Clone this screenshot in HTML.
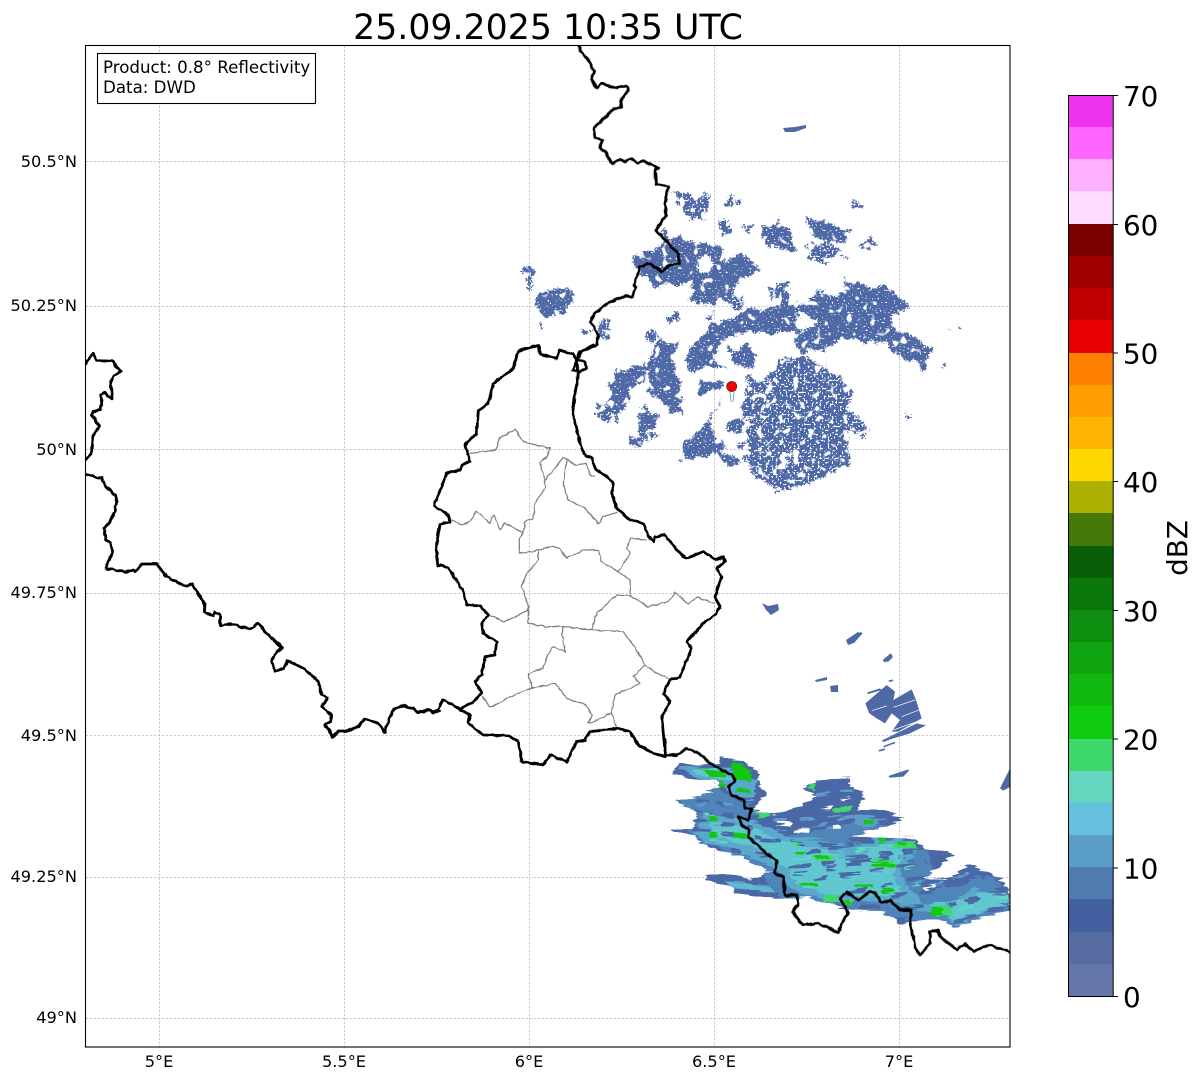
<!DOCTYPE html>
<html><head><meta charset="utf-8"><title>Radar</title>
<style>html,body{margin:0;padding:0;background:#fff}svg{display:block}text{font-family:"DejaVu Sans","Liberation Sans",sans-serif;fill:#000}</style>
</head><body>
<svg width="1202" height="1081" viewBox="0 0 1202 1081" xmlns="http://www.w3.org/2000/svg">
<defs>
<clipPath id="ax"><rect x="85.5" y="45.5" width="924.5" height="1001"/></clipPath>
<filter id="speck" x="0" y="0" width="1202" height="1081" filterUnits="userSpaceOnUse" color-interpolation-filters="sRGB">
<feTurbulence type="fractalNoise" baseFrequency="0.09" numOctaves="2" seed="4" result="n1"/>
<feDisplacementMap in="SourceGraphic" in2="n1" scale="14" xChannelSelector="R" yChannelSelector="G" result="d1"/>
<feTurbulence type="fractalNoise" baseFrequency="0.55" numOctaves="1" seed="11" result="n3"/>
<feDisplacementMap in="d1" in2="n3" scale="7" xChannelSelector="G" yChannelSelector="R" result="d"/>
<feTurbulence type="fractalNoise" baseFrequency="0.5" numOctaves="1" seed="7" result="n2"/>
<feColorMatrix in="n2" type="matrix" values="0 0 0 0 0 0 0 0 0 0 0 0 0 0 0 14 0 0 0 -4" result="m"/>
<feComposite in="d" in2="m" operator="in" result="r1"/>
<feTurbulence type="fractalNoise" baseFrequency="0.13" numOctaves="1" seed="9" result="n4"/>
<feColorMatrix in="n4" type="matrix" values="0 0 0 0 0 0 0 0 0 0 0 0 0 0 0 14 0 0 0 -4.2" result="m2"/>
<feComposite in="r1" in2="m2" operator="in"/>
</filter>
<filter id="speck2" x="0" y="0" width="1202" height="1081" filterUnits="userSpaceOnUse" color-interpolation-filters="sRGB">
<feTurbulence type="fractalNoise" baseFrequency="0.09" numOctaves="2" seed="5" result="n1"/>
<feDisplacementMap in="SourceGraphic" in2="n1" scale="14" xChannelSelector="R" yChannelSelector="G" result="d1"/>
<feTurbulence type="fractalNoise" baseFrequency="0.55" numOctaves="1" seed="12" result="n3"/>
<feDisplacementMap in="d1" in2="n3" scale="7" xChannelSelector="G" yChannelSelector="R" result="d"/>
<feTurbulence type="fractalNoise" baseFrequency="0.5" numOctaves="1" seed="17" result="n2"/>
<feColorMatrix in="n2" type="matrix" values="0 0 0 0 0 0 0 0 0 0 0 0 0 0 0 14 0 0 0 -5" result="m"/>
<feComposite in="d" in2="m" operator="in" result="r1"/>
<feTurbulence type="fractalNoise" baseFrequency="0.14" numOctaves="1" seed="19" result="n4"/>
<feColorMatrix in="n4" type="matrix" values="0 0 0 0 0 0 0 0 0 0 0 0 0 0 0 14 0 0 0 -4.6" result="m2"/>
<feComposite in="r1" in2="m2" operator="in"/>
</filter>
<filter id="jag" x="0" y="0" width="1202" height="1081" filterUnits="userSpaceOnUse" color-interpolation-filters="sRGB">
<feTurbulence type="fractalNoise" baseFrequency="0.04 0.4" numOctaves="1" seed="3" result="n"/>
<feDisplacementMap in="SourceGraphic" in2="n" scale="9" xChannelSelector="R" yChannelSelector="G"/>
</filter>
<filter id="wob" x="0" y="0" width="1202" height="1081" filterUnits="userSpaceOnUse" color-interpolation-filters="sRGB">
<feTurbulence type="fractalNoise" baseFrequency="0.2" numOctaves="1" seed="6" result="n"/>
<feDisplacementMap in="SourceGraphic" in2="n" scale="3" xChannelSelector="R" yChannelSelector="G"/>
</filter>
<clipPath id="stormclip"><path d="M180,50L250,65L295,95L295,130L320,160L300,185L275,210L340,225L430,195L470,165L430,145L470,125L570,110L570,140L610,155L610,180L590,210L670,210L730,235L680,260L575,290L640,295L760,295L800,330L860,335L880,340L830,385L790,415L860,420L930,375L985,395L1030,425L1050,460L1050,510L960,535L880,565L860,545L800,540L720,555L700,530L660,515L570,510L490,490L440,470L350,475L220,460L215,440L140,425L140,405L190,400L270,420L320,400L340,395L310,385L265,365L240,345L150,325L100,290L30,270L100,265L110,215L45,180L110,170L180,145L170,120L100,120L35,100L60,70L120,75L180,70Z"/></clipPath>
</defs>
<rect width="1202" height="1081" fill="#fff"/>

<!-- gridlines -->
<g stroke="#c0c0c0" stroke-width="0.8" stroke-dasharray="2.5 1.5" fill="none">
<path d="M159.5 45.5V1047M344.5 45.5V1047M529.5 45.5V1047M714.5 45.5V1047M899.5 45.5V1047"/>
<path d="M85.5 161.5H1010M85.5 306.5H1010M85.5 449.5H1010M85.5 593.5H1010M85.5 735.5H1010M85.5 877.5H1010M85.5 1018.5H1010"/>
</g>

<g clip-path="url(#ax)">
<!-- radar north, dense -->
<g filter="url(#speck)" fill="#4e69a6">
<g transform="translate(580 180) scale(.33333)">
<path fill-rule="evenodd" d="M240,150L300,170L360,190L430,210L420,240L500,225L530,260L490,300L440,350L380,370L330,360L335,300L300,310L225,325L190,280L160,260L160,225L220,215L260,180ZM375,230A25,25 0 1 0 375,280A25,25 0 1 0 375,230Z"/>
<path d="M545,140L590,125L640,140L640,210L600,215L550,185Z"/>
<path d="M680,115L740,120L810,150L790,190L700,170Z"/>
<path fill-rule="evenodd" d="M500,390L600,380L590,330L620,320L630,380L720,340L800,340L790,290L850,310L940,330L990,380L945,410L940,450L1020,480L1060,500L1040,570L960,530L920,490L850,490L790,480L730,510L650,520L640,450L570,460L490,460L440,470L400,530L440,570L400,560L340,580L310,540L340,490L390,430L440,420ZM650,390L705,420L695,445L650,445Z"/>
<path d="M110,580L200,540L240,470L300,490L280,540L300,620L300,680L310,710L250,670L200,630L210,580L160,620L130,680L110,730L80,670L90,620Z"/>
<path d="M190,680L240,720L200,760L240,765L210,790L170,760Z"/>
<path d="M430,640L400,700L390,750L440,790L410,820L470,830L470,860L440,850L400,820L310,840L300,800L320,780L360,750L390,710Z"/>
<path d="M340,600L420,600L420,630L370,640Z"/>
<path d="M450,510L500,490L530,520L520,560L470,560Z"/>
</g>
<path d="M537,298L560,286L576,292L566,312L545,318L536,308Z"/>
</g>
<!-- radar north, sparse -->
<g filter="url(#speck2)" fill="#4e69a6">
<g transform="translate(580 180) scale(.33333)">
<path d="M280,40L390,50L370,110L340,125L300,70Z"/>
<path d="M415,125L450,120L450,160L420,160ZM475,135L515,140L510,155L480,150ZM465,55L485,60L480,72L465,70ZM440,45L460,45L455,90L440,85Z"/>
<path d="M690,180L770,200L780,220L740,255L685,240Z"/>
<path d="M830,195L870,175L895,195L860,215ZM815,55L850,75L835,90ZM785,225L815,235L790,240Z"/>
<path d="M600,540L680,530L780,590L810,620L800,680L870,760L800,760L800,850L720,900L600,935L530,900L495,840L500,730L550,690L570,640L570,590Z"/>
<path fill="#fff" d="M600,880L640,815L615,815L595,850Z"/>
<path d="M510,620L550,630L530,670L510,650ZM485,600L510,590L510,605ZM480,680L510,690L490,710ZM440,720L490,720L480,760L450,750ZM470,780L500,780L495,800L475,800Z"/>
<path d="M500,600L565,590L545,700L490,720Z"/>
<path d="M1110,440L1130,450L1115,458ZM1140,430L1158,445L1145,450ZM980,705L995,708L990,718ZM1080,555L1100,548L1095,570Z"/>
<path d="M5,450L30,445L28,470L5,465ZM50,430L88,420L85,470L60,470ZM260,400L295,395L295,425L265,420Z"/>
<path d="M430,340L490,350L480,385L440,380ZM560,320L620,300L610,350L570,360ZM700,335L730,330L720,350Z"/>
<path d="M380,400L410,400L395,425Z"/>
<path d="M200,450L250,460L230,490L195,480ZM50,670L100,690L90,730L45,705ZM140,760L175,770L195,810L150,790Z"/>
</g>
<path d="M524,268L532,268L532,290L526,290Z"/>
<path d="M537,325L542,325L541,335L537,335Z"/>
</g>

<!-- small echoes -->
<g fill="#4e69a6">
<path d="M783,128L795,127L806,125L806,128L795,132L785,132Z"/>
<path d="M762,603L768,606L778,604L779,610L771,615L766,610Z"/>
<path d="M846,640L858,632L862,634L854,643L848,645Z"/>
<path d="M885,661L890,655L893,657L888,662Z"/>
<path d="M815,680L827,677L827,680L816,682Z"/>
<path d="M830,686L838,685L838,692L831,692Z"/>
<g transform="translate(860 620) scale(.33333)">
<path d="M0,35L8,40L0,48Z"/>
<path d="M68,120L92,100L98,108L74,128Z"/>
<path d="M85,182L98,178L100,183L88,186Z"/>
<path d="M20,218L60,205L65,210L25,222Z"/>
<path d="M16,250L80,195L105,215L100,240L155,208L168,240L185,295L115,335L95,335L120,300L95,280L75,310L50,295L28,280Z"/>
<path d="M65,362L170,310L198,316L150,340L100,355L70,366Z"/>
<path d="M70,378L105,365L105,370L72,382Z"/>
<path d="M55,390L75,385L75,390L58,395Z"/>
<path d="M85,468L145,448L147,452L130,470L90,473Z"/>
<path d="M420,505L450,445L452,500L430,512Z"/>
<g stroke="#fff" stroke-width="2" fill="none">
<path d="M35,272L80,258M100,262L165,240M125,290L182,268M100,330L170,305"/>
</g>
</g>
</g>

<!-- storm south -->
<g filter="url(#jag)">
<g transform="translate(660 740) scale(.33333)">
<g clip-path="url(#stormclip)">
<rect x="0" y="0" width="1100" height="620" fill="#4a67a6"/>
<path fill="#4f85b8" d="M60,175L180,150L280,200L300,250L380,290L480,270L600,240L700,260L560,300L800,330L820,390L780,440L880,430L980,400L1045,450L1045,510L880,560L700,530L500,490L360,470L300,400L150,320L90,280Z"/>
<path fill="#5aa8cc" d="M130,225L270,240L300,250L380,290L480,300L600,320L650,290L750,300L770,340L720,390L730,420L790,490L860,510L900,470L940,440L1000,470L1045,470L1045,490L960,520L890,560L850,520L780,510L700,490L600,480L500,480L420,460L380,430L350,390L270,350L200,320L140,310L100,280Z"/>
<path fill="#5aa8cc" d="M60,80L210,85L290,120L280,180L220,170L190,140L100,110Z"/>
<path fill="#5f9cc8" d="M580,225L680,235L620,265L590,260Z"/>
<path fill="#5fb8d4" d="M190,420L260,430L330,440L350,460L220,445Z"/>
<path fill="#60c6cf" d="M150,250L270,260L380,310L470,320L540,350L600,350L660,310L740,310L720,370L700,400L720,470L640,470L500,460L420,440L370,380L280,320L160,290Z"/>
<path fill="#60c6cf" d="M800,490L900,480L960,460L1040,470L1040,490L950,520L890,555L870,530Z"/>
<path fill="#60c6cf" d="M95,90L170,80L220,120L180,120L110,105Z"/>
<g fill="none" stroke="#4a67a6" stroke-width="11">
<path stroke-dasharray="60 25 35 40" d="M100,215L300,235"/>
<path stroke-dasharray="50 35 70 30" d="M100,265L300,295"/>
<path stroke-dasharray="45 30 30 45" d="M140,320L340,345"/>
<path stroke-dasharray="60 30 40 50" d="M300,300L560,320"/>
<path stroke-dasharray="40 30 70 25" d="M440,340L720,290"/>
<path stroke-dasharray="70 35 40 30" d="M380,385L780,325"/>
<path stroke-dasharray="40 40 60 30" d="M460,420L800,365"/>
<path stroke-dasharray="60 50 30 40" d="M560,460L850,400"/>
<path stroke-dasharray="50 30 70 40" d="M780,460L1000,400"/>
<path stroke-dasharray="60 30 40 40" d="M830,510L1050,440"/>
<path stroke-dasharray="70 40 50 30" d="M880,545L1050,495"/>
<path stroke-dasharray="60 70" d="M600,500L800,500"/>
<path stroke-dasharray="35 20 50 40" d="M110,180L260,205"/>
<path stroke-dasharray="45 55 25 35" d="M400,400L720,350"/>
<path stroke-dasharray="30 45 60 25" d="M500,380L760,340"/>
<path stroke-dasharray="55 45" d="M690,470L860,440"/>
<path stroke-dasharray="35 40" d="M110,240L280,265"/>
<path stroke-dasharray="40 60" d="M920,490L1040,450"/>
</g>
<g fill="none" stroke="#5f9cc8" stroke-width="7">
<path stroke-dasharray="45 35" d="M460,260L620,220"/>
<path stroke-dasharray="30 50" d="M110,195L260,190"/>
<path stroke-dasharray="40 40" d="M340,240L580,230"/>
<path stroke-dasharray="50 30" d="M800,440L940,395"/>
<path stroke-dasharray="35 40" d="M330,440L200,420"/>
<path stroke-dasharray="40 30" d="M400,170L590,150"/>
<path stroke-dasharray="30 45" d="M350,270L570,260"/>
<path stroke-dasharray="35 35" d="M60,85L160,100"/>
</g>
<g fill="none" stroke="#62d6c0" stroke-width="6">
<path stroke-dasharray="50 40 30 60" d="M150,300L420,330"/>
<path stroke-dasharray="60 35" d="M400,360L740,310"/>
<path stroke-dasharray="50 50" d="M440,440L760,380"/>
<path stroke-dasharray="60 40" d="M900,510L1040,465"/>
<path stroke-dasharray="40 60" d="M120,95L220,120"/>
<path stroke-dasharray="40 50" d="M130,220L260,240"/>
<path stroke-dasharray="45 35" d="M600,470L780,430"/>
</g>
<g fill="#3fd86c">
<path d="M700,310L760,300L770,320L700,325Z"/>
<path d="M640,355L700,365L705,385L650,380Z"/>
<path d="M815,500L870,495L880,530L830,530Z"/>
<path d="M520,210L580,195L570,212L530,220Z"/>
<path d="M745,262L790,245L785,255L750,270Z"/>
<path d="M460,350L520,345L510,360L470,362Z"/>
<path d="M110,80L150,85L135,95Z"/>
<path d="M440,135L470,130L460,150Z"/>
<path d="M490,470L540,460L530,480L495,485Z"/>
<path d="M540,480L590,478L570,495L550,497Z"/>
<path d="M280,215L330,225L300,235Z"/>
<path d="M380,310L410,305L415,320Z"/>
</g>
<g fill="#10c810">
<path d="M215,70L250,75L275,100L270,125L225,120Z"/>
<path d="M135,95L195,95L200,115L140,110Z"/>
<path d="M175,125L200,128L195,140L178,140Z"/>
<path d="M225,145L275,150L270,160L230,158Z"/>
<rect x="148" y="232" width="25" height="15"/>
<rect x="148" y="277" width="22" height="17"/>
<rect x="218" y="278" width="42" height="14"/>
<rect x="612" y="240" width="28" height="14"/>
<rect x="585" y="430" width="55" height="13"/>
<rect x="665" y="445" width="35" height="12"/>
<rect x="635" y="365" width="50" height="10"/>
<rect x="685" y="370" width="20" height="12"/>
<rect x="815" y="505" width="32" height="20"/>
<rect x="655" y="295" width="25" height="12"/>
<rect x="712" y="305" width="25" height="12"/>
<rect x="470" y="348" width="35" height="8"/>
<rect x="420" y="430" width="50" height="8"/>
<rect x="410" y="335" width="25" height="8"/>
<rect x="550" y="480" width="20" height="15"/>
</g>
<g fill="#fff">
<path d="M350,240L398,240L395,255L352,252Z"/>
<path d="M400,268L450,268L448,280L405,278Z"/>
<path d="M515,258L540,255L538,262L518,264Z"/>
<path d="M540,175L570,170L560,182Z"/>
<path d="M480,205L520,200L515,212Z"/>
<path d="M790,445L830,430L820,445L795,455Z"/>
</g>
</g>
</g>
</g>

<!-- districts -->
<g filter="url(#wob)">
<g transform="translate(420 340) scale(.33333)" fill="none" stroke="#808080" stroke-width="3.8" stroke-linejoin="round" stroke-linecap="round">
<path d="M150,340L195,335L230,328L238,295L262,282L285,268L310,305L365,320L390,325L385,345L360,370L375,420L375,445L345,490L340,535L315,545L310,580L285,565L255,548L240,570L222,525L210,550L170,512L150,545L125,555L95,540"/>
<path d="M310,580L298,595L298,640L355,630L395,620L420,625L440,655L490,630L535,630L545,665L595,695L630,720L632,768"/>
<path d="M375,420L430,352L440,355L430,430L445,480L495,505L535,550L550,530L590,518"/>
<path d="M440,355L465,375L500,370L510,405L525,410"/>
<path d="M355,630L355,660L320,700L305,740L325,800L325,850L375,860L430,860L515,870L530,820L590,765L632,768L685,800L745,785L765,758L805,792L830,772L885,790"/>
<path d="M595,695L630,640L620,625L632,595L680,600"/>
<path d="M325,810L255,845L205,825"/>
<path d="M430,860L425,880L435,935L400,920L380,950L370,985L325,1000L335,1045L405,1030L440,1075L500,1095L515,1125L505,1150L575,1120L590,1165"/>
<path d="M515,870L610,875L650,930L675,975L710,1000L745,1015"/>
<path d="M675,975L640,1010L660,1030L640,1040L585,1065L575,1120"/>
<path d="M335,1045L270,1070L215,1100L205,1100L190,1070"/>
</g>

<!-- borders -->
<g fill="none" stroke="#000" stroke-linejoin="round" stroke-linecap="round">
<g transform="translate(80 340) scale(.33333)" stroke-width="8.4">
<path d="M16,70L40,40L50,62L100,64L110,85L124,92L100,110L92,125L96,175L85,170L75,157L62,165L65,185L62,208L40,215L36,225L45,235L47,245L60,258L38,288L34,340L25,352L17,360"/>
<path d="M16,403L65,415L75,435L105,465L110,485L105,515L85,553L72,565L77,600L92,607L97,640L77,683L82,690L95,685L110,692L125,692L135,697L160,690L165,695L175,685L185,672L230,672L258,708L312,738L337,733L375,795L373,815L398,828L405,815L420,822L421,857L445,853L470,855L478,860L510,866L535,850L555,875L607,923L590,935L575,963L585,995L612,985L622,962L675,987L715,1025L725,1065L742,1073L727,1100L755,1127L752,1145L733,1155L748,1170L757,1192L775,1173L800,1173L835,1160L853,1137L895,1150L915,1177L927,1135L945,1105L970,1095L980,1102L1000,1105L1015,1118L1040,1115L1048,1108L1062,1118L1080,1113"/>
</g>
<g transform="translate(420 340) scale(.33333)" stroke-width="8.4">
<path d="M0,1115L25,1110L40,1118L55,1105L70,1080L120,1108L160,1085L185,1060L165,1025L185,1005L195,950L225,945L230,905L190,880L185,850L205,825L180,798L140,795L130,755L85,682L55,675L48,620L60,553L90,545L85,525L42,497L80,400L120,390L125,375L150,365L135,315L170,280L175,212L205,190L220,130L280,85L295,33L355,15L362,43L410,55L418,30L460,42L470,60L458,90L480,97L498,85L495,65L470,60L475,100L465,160L458,220L475,290L490,340L515,355L525,385L560,410L580,430L575,460L590,505L630,540L670,550L685,590L700,605L705,590L735,585L770,630L800,655L850,635L890,660L910,650L915,665L890,685L905,710L885,770L900,800L885,825L850,850L800,905L815,925L780,1010L750,1020L730,1060L750,1085L725,1130L737,1250"/>
<path d="M120,1108L150,1125L145,1150L190,1185L265,1187L295,1205L305,1265L370,1275L390,1245L440,1265L470,1205L495,1200L510,1175L595,1165L630,1175L655,1215L700,1240L737,1250"/>
<path d="M470,60L480,35L520,15"/>
</g>
<g transform="translate(560 40) scale(.33333)" stroke-width="8.4">
<path d="M48,965L65,935L110,915L115,885L92,845L103,822L130,800L140,790L195,768L215,770L228,745L222,735L240,680L270,670L305,695L330,675L358,670L355,640L310,595L288,570L318,525L315,490L325,440L288,432L285,390L295,385L250,362L235,368L210,355L195,365L182,358L157,372L135,335L118,322L128,300L105,292L100,265L160,208L185,200L180,185L205,150L200,140L160,142L125,130L110,145L95,118L102,95L90,65L70,45L55,18"/>
</g>
<g transform="translate(660 740) scale(.33333)" stroke-width="8.4">
<path d="M15,0L15,45L50,45L80,25L125,45L150,70L215,105L225,122L205,140L215,165L250,180L255,205L275,205L265,240L235,230L245,255L268,270L265,290L325,345L350,360L345,400L370,410L375,465L410,465L415,490L398,515L428,555L475,550L535,578L550,540L565,520L540,475L560,457L595,480L630,455L645,460L665,487L690,482L720,510L755,510L750,550L770,635L780,645L810,610L810,575L835,570L840,590L890,628L915,612L940,635L985,615L1035,630L1055,640"/>
</g>
</g>
</g>

<!-- radar site -->
<g fill="none" stroke="#6bb5d8" stroke-width="1"><path d="M730,392L731,402M734,392L733,402"/></g>
<circle cx="731.7" cy="386.5" r="5" fill="#f00" stroke="#5a1a1a" stroke-width="0.8"/>
</g>

<!-- axes frame -->
<rect x="85.5" y="45.5" width="924.5" height="1001.5" fill="none" stroke="#000" stroke-width="1.1"/>

<!-- info box -->
<rect x="97.5" y="53.5" width="218" height="50" fill="#fff" stroke="#000" stroke-width="1.1"/>
<text x="103" y="73" font-size="16.67">Product: 0.8° Reflectivity</text>
<text x="103" y="93" font-size="16.67">Data: DWD</text>

<!-- title -->
<text x="548" y="39" font-size="34.72" text-anchor="middle">25.09.2025 10:35 UTC</text>

<!-- y labels -->
<g font-size="16.2" text-anchor="end">
<text x="77" y="167">50.5°N</text>
<text x="77" y="311">50.25°N</text>
<text x="77" y="455">50°N</text>
<text x="77" y="598">49.75°N</text>
<text x="77" y="741">49.5°N</text>
<text x="77" y="882">49.25°N</text>
<text x="77" y="1023">49°N</text>
</g>
<!-- x labels -->
<g font-size="16.2" text-anchor="middle">
<text x="159" y="1067">5°E</text>
<text x="344" y="1067">5.5°E</text>
<text x="529" y="1067">6°E</text>
<text x="714" y="1067">6.5°E</text>
<text x="899" y="1067">7°E</text>
</g>

<!-- colorbar -->
<g shape-rendering="crispEdges">
<rect x="1069" y="95" width="44" height="33" fill="#ee33ee"/>
<rect x="1069" y="127" width="44" height="33" fill="#ff66ff"/>
<rect x="1069" y="159" width="44" height="33" fill="#ffb0ff"/>
<rect x="1069" y="191" width="44" height="34" fill="#ffdcff"/>
<rect x="1069" y="224" width="44" height="33" fill="#7a0000"/>
<rect x="1069" y="256" width="44" height="33" fill="#a00000"/>
<rect x="1069" y="288" width="44" height="33" fill="#c00000"/>
<rect x="1069" y="320" width="44" height="34" fill="#e60000"/>
<rect x="1069" y="353" width="44" height="33" fill="#ff8000"/>
<rect x="1069" y="385" width="44" height="33" fill="#ff9c00"/>
<rect x="1069" y="417" width="44" height="33" fill="#ffb400"/>
<rect x="1069" y="449" width="44" height="33" fill="#ffd800"/>
<rect x="1069" y="481" width="44" height="33" fill="#acb000"/>
<rect x="1069" y="513" width="44" height="34" fill="#457a08"/>
<rect x="1069" y="546" width="44" height="33" fill="#085f08"/>
<rect x="1069" y="578" width="44" height="33" fill="#0a780a"/>
<rect x="1069" y="610" width="44" height="33" fill="#0e8e0e"/>
<rect x="1069" y="642" width="44" height="33" fill="#10a410"/>
<rect x="1069" y="674" width="44" height="33" fill="#10b810"/>
<rect x="1069" y="706" width="44" height="34" fill="#10cc10"/>
<rect x="1069" y="739" width="44" height="33" fill="#3fd86c"/>
<rect x="1069" y="771" width="44" height="33" fill="#64d6c0"/>
<rect x="1069" y="803" width="44" height="33" fill="#64c0dc"/>
<rect x="1069" y="835" width="44" height="33" fill="#5a9dc6"/>
<rect x="1069" y="867" width="44" height="33" fill="#4f7bb0"/>
<rect x="1069" y="899" width="44" height="34" fill="#445fa0"/>
<rect x="1069" y="932" width="44" height="33" fill="#566b9f"/>
<rect x="1069" y="964" width="44" height="33" fill="#6577a8"/>
</g>
<rect x="1068.5" y="95.5" width="44.7" height="901" fill="none" stroke="#000" stroke-width="1"/>
<g stroke="#000" stroke-width="1">
<path d="M1113 95.5H1118M1113 224.5H1118M1113 353H1118M1113 481.5H1118M1113 610.5H1118M1113 739H1118M1113 868H1118M1113 996.5H1118"/>
</g>
<g font-size="27.78">
<text x="1123" y="106">70</text>
<text x="1123" y="235">60</text>
<text x="1123" y="363.500">50</text>
<text x="1123" y="492">40</text>
<text x="1123" y="621">30</text>
<text x="1123" y="749.500">20</text>
<text x="1123" y="878.500">10</text>
<text x="1123" y="1007">0</text>
</g>
<text transform="translate(1187 548) rotate(-90)" font-size="27.78" text-anchor="middle">dBZ</text>
</svg>
</body></html>
